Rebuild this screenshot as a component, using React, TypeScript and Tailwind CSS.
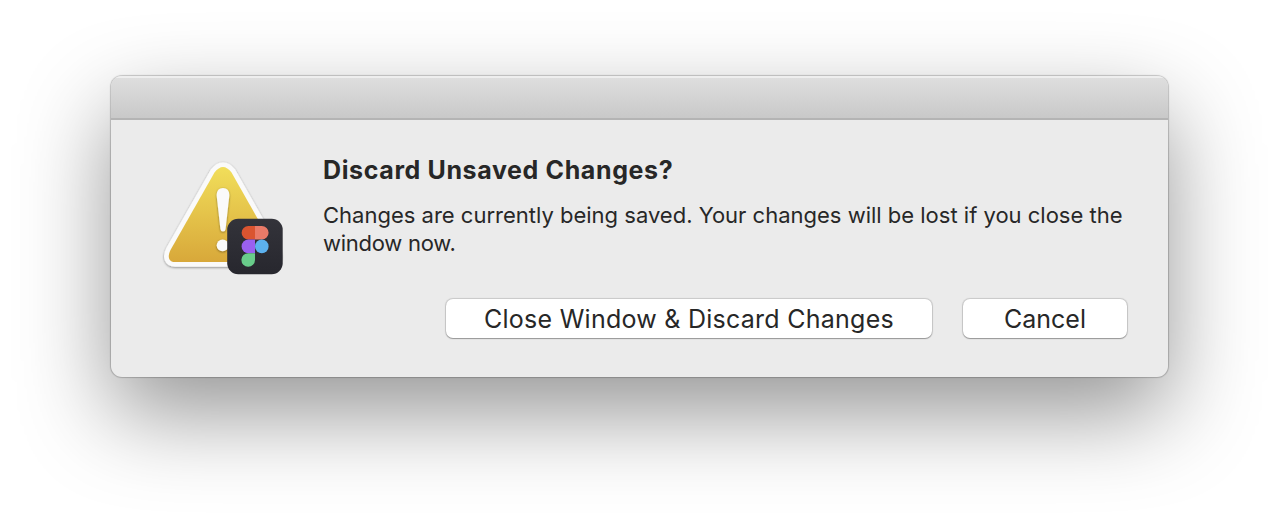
const TRIANGLE =
  'M214.5 172.5 Q223 161.5 231.5 172.5 L275.5 250 C279 257 277 262 271 262 H175 C169 262 167 257 170.5 250 Z';

function WarningIcon() {
  return (
    <svg className="block h-[124px] w-[132px]" viewBox="158 156 132 124" aria-hidden="true">
      <defs>
        <linearGradient id="yellow" x1="0" y1="0" x2="0" y2="1">
          <stop offset="0" stopColor="#f1de5a" />
          <stop offset="1" stopColor="#d8a83a" />
        </linearGradient>
        <linearGradient id="tile" x1="0" y1="0" x2="0" y2="1">
          <stop offset="0" stopColor="#33333a" />
          <stop offset="1" stopColor="#27272e" />
        </linearGradient>
        <filter id="soft" x="-20%" y="-20%" width="140%" height="140%">
          <feDropShadow dx="0" dy="0.8" stdDeviation="0.9" floodColor="#000" floodOpacity="0.45" />
        </filter>
      </defs>

      {/* Warning triangle */}
      <path d={TRIANGLE} fill="#fafafa" stroke="#fafafa" strokeWidth="9.5" strokeLinejoin="round" filter="url(#soft)" />
      <path d={TRIANGLE} fill="url(#yellow)" />
      <g fill="#fafafa" filter="url(#soft)">
        <path d="M216.6 195 Q217 188 223 188 Q229 188 229.4 195 L225.6 229 Q225.2 231.6 223 231.6 Q220.8 231.6 220.4 229 Z" />
        <circle cx="222.6" cy="245.3" r="5.9" />
      </g>

      {/* App badge */}
      <rect x="227.2" y="218.8" width="55.5" height="55.4" rx="11" fill="url(#tile)" />
      <path d="M255 226 H248.4 a6.8 6.8 0 0 0 0 13.6 H255 Z" fill="#da5430" />
      <path d="M255 226 H261.8 a6.8 6.8 0 0 1 0 13.6 H255 Z" fill="#e97a68" />
      <path d="M255 239.6 H248.4 a6.8 6.8 0 0 0 0 13.6 H255 Z" fill="#9a60f0" />
      <circle cx="261.8" cy="246.4" r="6.8" fill="#5cb1ee" />
      <path d="M255 253.2 H248.4 a6.8 6.8 0 1 0 6.6 6.8 Z" fill="#68cc8a" />
    </svg>
  );
}

export default function App() {
  return (
    <div className="h-[524px] w-full overflow-hidden bg-white pt-[76px] pl-[111px] font-['Inter',sans-serif] text-[#272727]">
      <div className="flex h-[301px] w-[1057px] flex-col overflow-hidden rounded-[11px] bg-[#ebebeb] shadow-[0_0_1px_1px_rgba(0,0,0,0.2),0_36px_90px_rgba(0,0,0,0.42)]">
        {/* Title bar */}
        <div className="h-[44px] shrink-0 border-t-2 border-b-2 border-t-[#eeeeee] border-b-[#b4b4b4] bg-linear-to-b from-[#dedede] to-[#c9c9c9]" />

        <div className="flex pt-[36px] pl-[47px]">
          <WarningIcon />
          <div className="-mt-px ml-[33px] w-[804px]">
            <h1 className="h-[30px] text-[25px] leading-[30px] font-bold tracking-[0.62px] whitespace-nowrap">Discard Unsaved Changes?</h1>
            <p className="mt-[16px] text-[22px] leading-[28px] whitespace-nowrap">
              Changes are currently being saved. Your changes will be lost if you close the
              <br />
              <span className="tracking-[-0.25px]">window now.</span>
            </p>
            <div className="mt-[42px] flex justify-end gap-[31px] text-[25px]">
              <button className="h-[39px] w-[486px] rounded-[7px] bg-white pt-[2px] tracking-[0.26px] whitespace-nowrap shadow-[0_0_1px_1px_rgba(0,0,0,0.15),0_1px_1px_rgba(0,0,0,0.25)]">
                Close Window &amp; Discard Changes
              </button>
              <button className="h-[39px] w-[164px] rounded-[7px] bg-white pt-[2px] shadow-[0_0_1px_1px_rgba(0,0,0,0.15),0_1px_1px_rgba(0,0,0,0.25)]">
                Cancel
              </button>
            </div>
          </div>
        </div>
      </div>
    </div>
  );
}
